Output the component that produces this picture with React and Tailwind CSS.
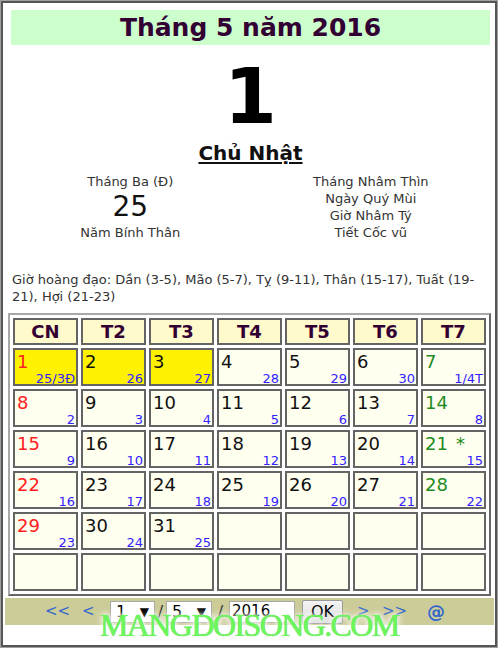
import React from "react";

const F = "font-['DejaVu_Sans',sans-serif]";

const weeks = [
  [
    { d: "1", l: "25/3Đ", c: "red", y: true },
    { d: "2", l: "26", y: true },
    { d: "3", l: "27", y: true },
    { d: "4", l: "28" },
    { d: "5", l: "29" },
    { d: "6", l: "30" },
    { d: "7", l: "1/4T", c: "green" },
  ],
  [
    { d: "8", l: "2", c: "red" },
    { d: "9", l: "3" },
    { d: "10", l: "4" },
    { d: "11", l: "5" },
    { d: "12", l: "6" },
    { d: "13", l: "7" },
    { d: "14", l: "8", c: "green" },
  ],
  [
    { d: "15", l: "9", c: "red" },
    { d: "16", l: "10" },
    { d: "17", l: "11" },
    { d: "18", l: "12" },
    { d: "19", l: "13" },
    { d: "20", l: "14" },
    { d: "21", l: "15", c: "green", star: true },
  ],
  [
    { d: "22", l: "16", c: "red" },
    { d: "23", l: "17" },
    { d: "24", l: "18" },
    { d: "25", l: "19" },
    { d: "26", l: "20" },
    { d: "27", l: "21" },
    { d: "28", l: "22", c: "green" },
  ],
  [
    { d: "29", l: "23", c: "red" },
    { d: "30", l: "24" },
    { d: "31", l: "25" },
    null,
    null,
    null,
    null,
  ],
  [null, null, null, null, null, null, null],
];

function Cell({ cell }) {
  if (!cell) {
    return <div className="h-[38px] border-2 border-[#646464] bg-[#fffff0]" />;
  }
  const color =
    cell.c === "red"
      ? "text-[#ff2020]"
      : cell.c === "green"
      ? "text-[#238a23]"
      : "text-[#111111]";
  return (
    <div
      className={
        "h-[38px] border-2 border-[#646464] flex flex-col justify-between pl-[2px] pr-[1px] " +
        (cell.y ? "bg-[#fff200]" : "bg-[#fffff0]")
      }
    >
      <div className={"text-[18px] leading-[20px] pt-[2px] " + color}>
        {cell.d}
        {cell.star && <span className="ml-[8px]">*</span>}
      </div>
      <div className="self-end text-[13px] leading-[13px] text-[#3322ff]">{cell.l}</div>
    </div>
  );
}

export default function App() {
  return (
    <div className={"w-[498px] h-[648px] border border-[#a0a0a0] bg-white " + F}>
      <div className="relative h-full border-2 border-[#555555] flex flex-col">
        {/* Title */}
        <div className="mt-[7px] ml-[8px] mr-[5px] h-[35px] bg-[#ccffcc] flex items-center justify-center text-[25px] font-bold text-[#330033]">
          Tháng 5 năm 2016
        </div>

        {/* Big day */}
        <div className="mt-[14px] ml-[7px] mr-[4px] text-center text-[76px] leading-[75px] font-bold text-black">
          1
        </div>

        {/* Weekday */}
        <div className="mt-[7px] ml-[7px] mr-[4px] text-center text-[20px] leading-[24px] font-bold text-[#111111]">
          <span className="underline underline-offset-[2px]">Chủ Nhật</span>
        </div>

        {/* Lunar info */}
        <div className="mt-[8px] ml-[7px] mr-[4px] grid grid-cols-2 text-[13px] leading-[17px] text-[#333333]">
          <div className="flex flex-col items-center">
            <div>Tháng Ba (Đ)</div>
            <div className="text-[28px] leading-[34px] text-[#111111]">25</div>
            <div>Năm Bính Thân</div>
          </div>
          <div className="flex flex-col items-center">
            <div>Tháng Nhâm Thìn</div>
            <div>Ngày Quý Mùi</div>
            <div>Giờ Nhâm Tý</div>
            <div>Tiết Cốc vũ</div>
          </div>
        </div>

        {/* Giờ hoàng đạo */}
        <div className="mt-[30px] pl-[9px] pr-[10px] text-[13px] leading-[17px] text-[#333333]">
          Giờ hoàng đạo: Dần (3-5), Mão (5-7), Tỵ (9-11), Thân (15-17), Tuất (19-21), Hợi (21-23)
        </div>

        {/* Calendar table */}
        <div className="mt-[8px] ml-[5px] w-[483px] border-2 border-t-[#a8a8a8] border-l-[#a8a8a8] border-r-[#666666] border-b-[#666666] p-[3px]">
          <div className="grid grid-cols-7 gap-[3px]">
            {["CN", "T2", "T3", "T4", "T5", "T6", "T7"].map((h) => (
              <div
                key={h}
                className="h-[27px] border-2 border-[#646464] bg-[#fffacc] flex items-center justify-center text-[18px] font-bold text-[#330033]"
              >
                {h}
              </div>
            ))}
            {weeks.flat().map((c, i) => (
              <Cell key={i} cell={c} />
            ))}
          </div>
        </div>

        {/* Nav bar */}
        <div className="mt-[2px] ml-[2px] mr-[1px] h-[27px] bg-[#cccc99] flex items-center pl-[40px] text-[15px] text-[#3366cc]">
          <div className="w-[24px]">&lt;&lt;</div>
          <div className="ml-[13px] w-[12px]">&lt;</div>
          <div className="ml-[16px] w-[45px] h-[22px] bg-white border border-[#a9a9a9] flex items-center justify-between px-[5px] text-[16px] text-black">
            <span>1</span>
            <span className="text-[12px]">▼</span>
          </div>
          <div className="w-[11px] text-center text-[16px] text-[#333333]">/</div>
          <div className="w-[46px] h-[22px] bg-white border border-[#a9a9a9] flex items-center justify-between px-[5px] text-[16px] text-black">
            <span>5</span>
            <span className="text-[12px]">▼</span>
          </div>
          <div className="w-[17px] text-center text-[16px] text-[#333333]">/</div>
          <div className="w-[66px] h-[22px] bg-white border border-[#a9a9a9] flex items-center px-[2px] text-[15px] text-black">
            2016
          </div>
          <div className="ml-[7px] w-[41px] h-[24px] rounded-[2px] border border-[#9a9a9a] bg-[linear-gradient(#f4f4f4,#dcdcdc)] flex items-center justify-center text-[16px] text-black">
            OK
          </div>
          <div className="ml-[14px] w-[12px]">&gt;</div>
          <div className="ml-[13px] w-[25px]">&gt;&gt;</div>
          <div className="ml-[20px] w-[18px] text-[18px] font-bold">@</div>
        </div>

        {/* Watermark */}
        <div className="absolute left-[97px] top-[606px] font-['Liberation_Serif',serif] text-[32px] leading-[32px] tracking-[-1.6px] text-[#6cf85a] [text-shadow:0_0_1px_#3fbf3f,0_0_3px_#ffffff,0_0_6px_#ffffff,0_0_9px_#ffffff]">
          MANGDOISONG.COM
        </div>
      </div>
    </div>
  );
}
